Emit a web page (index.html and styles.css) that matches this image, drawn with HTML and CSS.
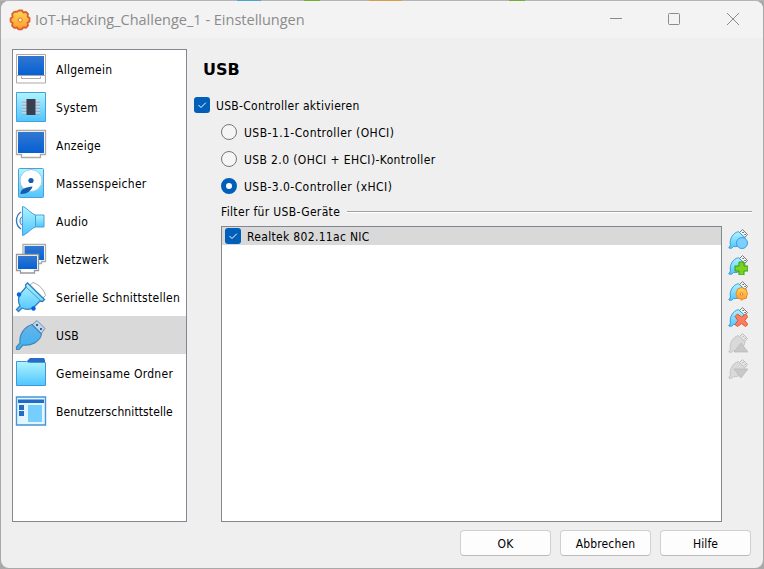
FILE: index.html
```
<!DOCTYPE html>
<html lang="de">
<head>
<meta charset="utf-8">
<title>IoT-Hacking_Challenge_1 - Einstellungen</title>
<link rel="stylesheet" href="styles.css">
</head>
<body>
<svg class="defs" width="0" height="0">
  <defs>
    <linearGradient id="sky" x1="0" y1="0" x2="0" y2="1"><stop offset="0" stop-color="#b0f4ff"/><stop offset="1" stop-color="#4fc5ff"/></linearGradient>
    <linearGradient id="blue" x1="0" y1="0" x2="0" y2="1"><stop offset="0" stop-color="#3277cf"/><stop offset="1" stop-color="#0560d5"/></linearGradient>
    <linearGradient id="plug" x1="0" y1="0" x2="0" y2="1"><stop offset="0" stop-color="#69b2e8"/><stop offset="1" stop-color="#36b4f2"/></linearGradient>
    <linearGradient id="sun" x1="0" y1="0" x2="0" y2="1"><stop offset="0" stop-color="#ffd65a"/><stop offset="1" stop-color="#ff9a2e"/></linearGradient>
    <g id="miniplug">
      <path d="M11.500 3.500 14.500.6l5 4.900-3 3.200z" fill="#f8f8f8" stroke="#777"/>
      <path d="M14.500 3.500h1.200M16.500 5.500h1.200" stroke="#333"/>
      <path d="M.8 19 2.500 16C1 10.500 5 3.500 10.500 2.700L17 8.500c0 5-6 10-11.500 9l-2 1.800z" fill="url(#sky)" stroke="#3c98d6"/>
    </g>
    <g id="grayplug">
      <path d="M11.500 3.500 14.500.6l5 4.900-3 3.200z" fill="#e8e8e8" stroke="#bbb"/>
      <path d="M14.500 3.500h1.200M16.500 5.500h1.200" stroke="#aaa"/>
      <path d="M.8 19 2.500 16C1 10.500 5 3.500 10.500 2.700L17 8.500c0 5-6 10-11.500 9l-2 1.800z" fill="#d9d9d9" stroke="#c4c4c4"/>
    </g>
  </defs>
</svg>
<div class="window">
  <header class="titlebar">
    <svg class="app-icon" width="22" height="22" viewBox="0 0 22 22">
      <path d="M8.500 2.500 10 1.500h3l1.300 2L17 3l2 2-.5 2.500 2 1.500v3.500l-2 1.300.5 2.700-2 2.200-2.700-.3-1.500 2h-3.300L8 18.500l-2.700.4-2.200-2.200.5-2.600-2-1.600V9.500l2-1.500L3.200 5l2-2.200z" fill="url(#sun)" stroke="#dc5f2a" stroke-width="1.800"/>
      <circle cx="11.200" cy="11" r="2" fill="#fff6cf" stroke="#d97828"/>
    </svg>
    <h1 class="title">IoT-Hacking_Challenge_1 - Einstellungen</h1>
    <svg class="controls" width="132" height="16" viewBox="0 0 132 16" fill="none" stroke="#8b8b8b">
      <path d="M1 6.500h12"/><rect x="59.500" y="1.500" width="11" height="11" rx="1"/><path d="m118 1 12 12M130 1l-12 12"/>
    </svg>
  </header>
  <div class="body">
    <nav class="sidebar">
      <div class="item"><svg class="icon" viewBox="0 0 32 32"><path d="M1.500 1.500h29v21h-29zM1.500 22.500v7.500h29v-7.500M6.500 23.500v2h19v-2" fill="#fff" stroke="#aaa"/><path d="M3 3h26v19H3z" fill="url(#blue)"/></svg><span>Allgemein</span></div>
      <div class="item"><svg class="icon" viewBox="0 0 32 32"><path d="M1.500 1.500h29v29h-29z" fill="url(#sky)" stroke="#4a9edb"/><path d="M7 10.500h18M7 13.500h18M7 16.500h18M7 19.500h18M7 22.500h18" stroke="#8ba4b5" stroke-width="2"/><path d="M7 10h18M7 13h18M7 16h18M7 19h18M7 22h18" stroke="#eef"/><path d="M11.500 8h9v16h-9z" fill="#38404f"/></svg><span>System</span></div>
      <div class="item"><svg class="icon" viewBox="0 0 32 32"><path d="M1.500 1.500h29v24h-5v3h-19v-3h-5z" fill="#fff" stroke="#aaa" stroke-width="1.300"/><path d="M3 3h26v21H3z" fill="url(#blue)"/></svg><span>Anzeige</span></div>
      <div class="item"><svg class="icon" viewBox="0 0 32 32"><rect x="3.500" y="1.500" width="25" height="29" rx="1" fill="url(#sky)" stroke="#4a9edb"/><circle cx="16" cy="13.500" r="11" fill="#fff" stroke="#9bc9df"/><path d="M5.500 27c-.5-5 6-7 12-7.500-1 4-6 8-12 7.500z" fill="#155cae"/><circle cx="16" cy="13.500" r="2.600" fill="#155cae"/></svg><span>Massenspeicher</span></div>
      <div class="item"><svg class="icon" viewBox="0 0 32 32"><path d="M6 7C0 11 0 20 6 24" fill="none" stroke="#3979bd" stroke-width="1.400"/><path d="M8 11c-4 2-4 8 0 10z" fill="#cceef8" stroke="#3979bd"/><path d="M7.500 1.500c3 0 9 7.500 13 8.500v12c-4 1-10 8.500-13 8.500z" fill="url(#sky)" stroke="#4a9edb"/><path d="M20.500 10h8.500v12h-8.500z" fill="url(#sky)" stroke="#4a9edb"/></svg><span>Audio</span></div>
      <div class="item"><svg class="icon" viewBox="0 0 32 32"><path d="M8 1.500h22.500v17h-4v2H8z" fill="#fff" stroke="#aaa" stroke-width="1.300"/><path d="M9.500 3H29v14H9.500z" fill="url(#blue)"/><path d="M1.500 11.500h22v16h-4v2.500h-14v-2.500h-4z" fill="#fff" stroke="#999" stroke-width="1.300"/><path d="M3 13h19v13H3z" fill="url(#blue)"/></svg><span>Netzwerk</span></div>
      <div class="item"><svg class="icon" viewBox="0 0 32 32"><path d="m14 5 4-3.500c6 2 11 7 12.500 13L27 18z" fill="#fff" stroke="#aaa"/><path d="M1.500 28.500 5 25C3 21 3 17 5 13l6-7-.5-2 2-2 17 16.500-2 2-2.500-.5-6 6c-4 3-8 3-12 1l-3.500 3.500z" fill="url(#sky)" stroke="#337dba" stroke-width="1.300"/><path d="m11 6 15 14" stroke="#469bd0" fill="none"/><circle cx="4" cy="13.500" r="2.200" fill="#0a60d8"/><circle cx="18.500" cy="27.500" r="2.200" fill="#0a60d8"/></svg><span>Serielle Schnittstellen</span></div>
      <div class="item selected"><svg class="icon" viewBox="0 0 32 32"><path d="m17 6 5-4.500 8 8L26 15z" fill="#b6d8f7" stroke="#7b8ca1"/><path d="M21 5h2v2h-2zM25 9h2v2h-2z" fill="#465a70"/><path d="M17 5.500 26.500 15C25 23 16 27 8 26l-4 4.500H1.500V28L5 24C4 16 9 8 17 5.500z" fill="url(#plug)" stroke="#4685b5" stroke-width="1.200"/></svg><span>USB</span></div>
      <div class="item"><svg class="icon" viewBox="0 0 32 32"><path d="M12 6V4l3-3h14l1 2v4z" fill="#2a6cc4"/><path d="M1.500 4.500h10l3 1h16v23h-29z" fill="url(#sky)" stroke="#3d98da"/></svg><span>Gemeinsame Ordner</span></div>
      <div class="item"><svg class="icon" viewBox="0 0 32 32"><path d="M1.500 2h29v28h-29z" fill="#e3f5ff" stroke="#4695d7" stroke-width="1.400"/><path d="M3 4.500h26v3.500H3zM4 10h5v5H4zM4 16h5v5H4z" fill="#216cc5"/><path d="M13 10h14v17H13z" fill="#76ceff"/></svg><span class="t-ui">Benutzerschnittstelle</span></div>
    </nav>
    <main class="page">
      <h2 class="heading">USB</h2>
      <label class="enable"><svg class="check" viewBox="0 0 16 16"><rect width="16" height="16" rx="3" fill="#005fb8"/><path d="m4.500 8 2.500 2.500 4.800-4.800" fill="none" stroke="#fff"/></svg><span>USB-Controller aktivieren</span></label>
      <div class="options">
        <label class="option"><i class="radio"></i><span>USB-1.1-Controller (OHCI)</span></label>
        <label class="option"><i class="radio"></i><span class="t-ehci">USB 2.0 (OHCI + EHCI)-Kontroller</span></label>
        <label class="option"><i class="radio on"></i><span>USB-3.0-Controller (xHCI)</span></label>
      </div>
      <div class="group"><span>Filter für USB-Geräte</span><i class="line"></i></div>
      <div class="filters">
        <div class="list"><div class="row"><svg class="check" viewBox="0 0 16 16"><rect width="16" height="16" rx="3" fill="#005fb8"/><path d="m4.500 8 2.500 2.500 4.800-4.800" fill="none" stroke="#fff"/></svg><span>Realtek 802.11ac NIC</span></div></div>
        <div class="tools">
          <svg class="tool" viewBox="0 0 20 20"><use href="#miniplug"/><circle cx="14" cy="14" r="5.500" fill="#7ccfff" stroke="#3d9fe0"/></svg>
          <svg class="tool" viewBox="0 0 20 20"><use href="#miniplug"/><path d="M11 7h5v4h4v5h-4v4h-5v-4H7v-5h4z" fill="#7bd31e" stroke="#3f9a16"/></svg>
          <svg class="tool" viewBox="0 0 20 20"><use href="#miniplug"/><path d="m12 7 2-.5L16 8l2.300.3.4 2.400 1 2-1 2-.4 2.500-2.500.5-2 1.500-2-1.500-2.500-.5-.5-2.500-1-2 1-2 .5-2.400z" fill="url(#sun)" stroke="#ed8427"/><circle cx="13.500" cy="13" r="1.300" fill="#fff5c8" stroke="#d97828"/></svg>
          <svg class="tool" viewBox="0 0 20 20"><use href="#miniplug"/><path d="m9.500 7 4 3 4-3 2.300 2.500-3 4 3 4-2.300 2-4-3-4 3-2.500-2 3-4-3-4z" fill="#fa805d" stroke="#e34f35"/></svg>
          <svg class="tool" viewBox="0 0 20 20"><use href="#grayplug"/><path d="m13 10 7 9H6z" fill="#c8c8c8" stroke="#b8b8b8" stroke-width=".7"/></svg>
          <svg class="tool" viewBox="0 0 20 20"><use href="#grayplug"/><path d="M6 10h14l-7 9z" fill="#c8c8c8" stroke="#b8b8b8" stroke-width=".7"/></svg>
        </div>
      </div>
    </main>
  </div>
  <footer class="buttons"><button>OK</button><button>Abbrechen</button><button>Hilfe</button></footer>
</div>
</body>
</html>
```
FILE: styles.css
```
* { box-sizing: border-box; }
body {
  margin: 0;
  width: 764px;
  height: 569px;
  overflow: hidden;
  background: linear-gradient(90deg, #b4b4b4 0 237px, #4ca3cf 237px 261px, #b4b4b4 261px 304px, #74ad35 304px 320px, #b4b4b4 320px 369px, #d79c4c 369px 402px, #b4b4b4 402px 509px, #74ad35 509px 525px, #b4b4b4 525px) 0 0 / 764px 1px no-repeat, #a9a9a9;
  font: 12px/16px "DejaVu Sans Condensed", "DejaVu Sans", sans-serif;
  font-stretch: condensed;
  color: #000;
}
.defs { display: block; }
.window {
  display: flex;
  flex-direction: column;
  width: 762px;
  height: 567px;
  margin: 1px;
  border-radius: 8px;
  background: #efefef;
  overflow: hidden;
}
.titlebar {
  display: flex;
  align-items: center;
  flex: none;
  height: 37px;
  padding: 0 22px 0 8px;
  background: #f3f3f3;
}
.title {
  flex: 1;
  margin: 0 0 0 4px;
  font: 400 14.500px/20px "Open Sans", sans-serif;
  font-stretch: normal;
  white-space: nowrap;
  color: #8b8b8b;
}
.body {
  display: flex;
  height: 484px;
  padding: 11px 0 0 11px;
}
.sidebar {
  width: 175px;
  height: 473px;
  border: 1px solid #828790;
  background: #fff;
}
.item {
  display: flex;
  align-items: center;
  gap: 9px;
  height: 38px;
  padding-left: 2px;
  white-space: nowrap;
  letter-spacing: .28px;
}
.item span, .enable span, .option span, .row span { padding-top: 2px; }
.item .t-ui { letter-spacing: .11px; }
.selected { background: #d9d9d9; }
.icon { flex: none; width: 32px; height: 32px; }
.page { flex: 1; display: flex; flex-direction: column; padding-left: 7px; }
.heading {
  margin: 10px 0 0 9px;
  font-family: "DejaVu Sans", sans-serif;
  font-stretch: normal;
  font-size: 16px;
  line-height: 22px;
}
.enable { display: flex; align-items: center; gap: 6px; height: 16px; margin-top: 16px; letter-spacing: .29px; }
.check { flex: none; width: 16px; height: 16px; }
.options { display: flex; flex-direction: column; gap: 11px; padding: 11px 0 0 27px; }
.option { display: flex; align-items: center; gap: 7px; height: 16px; letter-spacing: .44px; }
.option .t-ehci { letter-spacing: .38px; }
.radio {
  width: 16px;
  height: 16px;
  border: 1px solid #777;
  border-radius: 50%;
  background: #f5f5f5;
}
.radio.on { border: 5px solid #005fb8; background: #fff; }
.group { display: flex; align-items: center; gap: 7px; height: 16px; margin: 10px 11px 0 27px; letter-spacing: .34px; }
.line { flex: 1; height: 2px; margin-top: -1px; border-top: 1px solid #a0a0a0; background: #fff; }
.filters { display: flex; gap: 6px; margin: 6px 0 0 27px; }
.list { width: 501px; height: 296px; border: 1px solid #828790; background: #fff; }
.row {
  display: flex;
  align-items: center;
  gap: 6px;
  height: 18px;
  padding-left: 3px;
  background: #d9d9d9;
  letter-spacing: .32px;
}
.tools { display: flex; flex-direction: column; gap: 6px; padding-top: 3px; }
.tool { width: 20px; height: 20px; }
.buttons { display: flex; justify-content: flex-end; gap: 9px; padding: 8px 12px 0 0; }
.buttons button {
  width: 91px;
  height: 26px;
  padding: 2px 0 0;
  border: 1px solid #d0d0d0;
  border-bottom-color: #bbb;
  border-radius: 4px;
  background: #fdfdfd;
  font: inherit;
  letter-spacing: .12px;
  color: inherit;
}
```
